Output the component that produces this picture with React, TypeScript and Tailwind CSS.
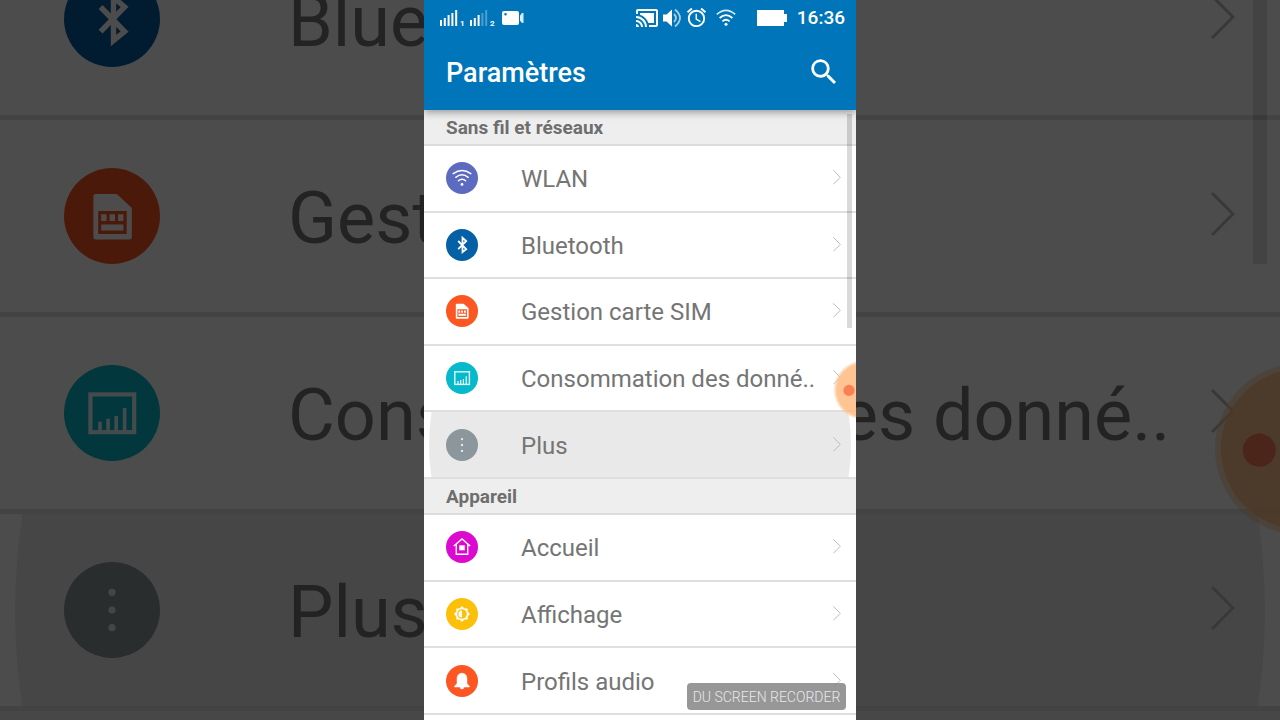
import React from "react";
import { MdAlarm, MdCastConnected, MdSearch } from "react-icons/md";

/* ROW ICONS, all drawn on a 32 unit disc */
const glyphs = {
  wifi: (
    <g fill="none" stroke="#fff" strokeWidth="1.5" strokeLinecap="round">
      <path d="M7.2 11.6Q16 5.4 24.8 11.6" />
      <path d="M9.8 15.3Q16 10.4 22.2 15.3" />
      <path d="M12.4 18.8Q16 15.6 19.6 18.8" />
      <circle cx="16" cy="22.4" r="1.4" fill="#fff" stroke="none" />
    </g>
  ),
  bluetooth: (
    <path d="M12.2 12L20.2 20.2L16.5 23.2V8.8L20.2 12L12.2 20.2" fill="none" stroke="#fff" strokeWidth="1.8" />
  ),
  sim: (
    <g fill="#fff">
      <path
        fillRule="evenodd"
        d="M10.6 8.7H17.6L22.6 13.3V23C22.6 23.5 22.3 23.8 21.8 23.8H10.6C10.1 23.8 9.8 23.5 9.8 23V9.5C9.8 9 10.1 8.7 10.6 8.7ZM11.4 14.3V22H20.9V14.3Z"
      />
      <path d="M12.4 15.4h1.8v2.3h-1.8zM15.2 15.4h1.8v2.3h-1.8zM18 15.4h1.8v2.3h-1.8zM12.4 18.8h7.4v2h-7.4z" />
    </g>
  ),
  data: (
    <g fill="none" stroke="#e6fbfd">
      <rect x="8.8" y="9.8" width="14.6" height="12.6" strokeWidth="1.4" />
      <path d="M12 22V18.9M14.7 22V17.9M17.4 22V17M20.2 22V14.3" strokeWidth="1.2" />
    </g>
  ),
  more: (
    <g fill="#e4e8ea">
      <circle cx="16" cy="10.1" r="1.2" />
      <circle cx="16" cy="16" r="1.2" />
      <circle cx="16" cy="21.9" r="1.2" />
    </g>
  ),
  home: (
    <g>
      <path d="M7.8 15L16 8L24.2 15M10.3 13.2V23.2H21.7V13.2" fill="none" stroke="#fff" strokeWidth="1.4" />
      <rect x="13.3" y="14.3" width="5.4" height="5" fill="#fff" />
    </g>
  ),
  display: (
    <g>
      <path
        fillRule="evenodd"
        fill="#fff"
        d="M16 8L18.4 10.4H21.6V13.6L24 16L21.6 18.4V21.6H18.4L16 24L13.6 21.6H10.4V18.4L8 16L10.4 13.6V10.4H13.6ZM16 11.2A4.8 4.8 0 1 0 16 20.8A4.8 4.8 0 1 0 16 11.2Z"
      />
      <path d="M16 12.4A3.6 3.6 0 0 0 16 19.6Z" fill="#fff" />
    </g>
  ),
  bell: (
    <path
      d="M16 8.2C19.4 8.2 21 10.8 21 13.8V18.4L23.4 21.2V22H18A2 2 0 0 1 14 22H8.6V21.2L11 18.4V13.8C11 10.8 12.6 8.2 16 8.2Z"
      fill="#fff"
      stroke="#fff"
      strokeWidth="0.5"
    />
  ),
};

type Item = { label: string; color: string; glyph: keyof typeof glyphs; pressed?: boolean };

const wireless: Item[] = [
  { label: "WLAN", color: "#5c6bc0", glyph: "wifi" },
  { label: "Bluetooth", color: "#0560a6", glyph: "bluetooth" },
  { label: "Gestion carte SIM", color: "#fc5622", glyph: "sim" },
  { label: "Consommation des donné..", color: "#06b9cc", glyph: "data" },
  { label: "Plus", color: "#8b979c", glyph: "more", pressed: true },
];

const device: Item[] = [
  { label: "Accueil", color: "#dc0ad0", glyph: "home" },
  { label: "Affichage", color: "#fdc00a", glyph: "display" },
  { label: "Profils audio", color: "#fc5622", glyph: "bell" },
];

const small = {
  row: "border-b-2 pl-[22px] pr-[15px]",
  disc: "size-8",
  label: "ml-[43px] pt-0.5 text-2xl",
  chevron: "h-4 w-2",
  ripple: "size-[422px]",
};

const large = {
  row: "border-b-5 pl-16 pr-[45px]",
  disc: "size-24",
  label: "ml-32 pt-1.5 text-7xl",
  chevron: "h-12 w-6",
  ripple: "size-[1250px]",
};

function Row({ item, size }: { item: Item; size: typeof small }) {
  return (
    <li className="min-h-0">
      <a href="#" className={`relative flex h-full items-center overflow-hidden border-[#dfdfdf] ${size.row}`}>
        {item.pressed && (
          <span
            className={`absolute top-1/2 left-1/2 -translate-x-1/2 -translate-y-1/2 rounded-full bg-[#e9e9e9] ${size.ripple}`}
          />
        )}
        <svg viewBox="0 0 32 32" className={`relative shrink-0 ${size.disc}`}>
          <circle cx="16" cy="16" r="16" fill={item.color} />
          {glyphs[item.glyph]}
        </svg>
        <span className={`relative flex-1 whitespace-nowrap text-[#757575] ${size.label}`}>{item.label}</span>
        <svg viewBox="0 0 24 48" className={`relative shrink-0 ${size.chevron}`}>
          <path d="M1 1L22 22L1 43" fill="none" stroke="#bdbdbd" strokeWidth="3" />
        </svg>
      </a>
    </li>
  );
}

function SectionTitle({ children }: { children: React.ReactNode }) {
  return (
    <h2 className="flex h-9 items-center border-b-2 border-[#dcdcdc] bg-[#eee] pt-0.5 pl-[22px] text-[19px] font-bold text-[#6e6e6e]">
      {children}
    </h2>
  );
}

function FloatingDot({ className }: { className: string }) {
  return (
    <svg viewBox="0 0 24 60" className={`absolute top-[360px] right-0 ${className}`}>
      <circle cx="31" cy="30" r="29" fill="#fdc08a" fillOpacity="0.5" />
      <circle cx="31" cy="30" r="27" fill="#fdbb80" fillOpacity="0.75" />
      <circle cx="17" cy="30.4" r="5.6" fill="#fb7e55" />
    </svg>
  );
}

function Signal({ level, sim }: { level: number; sim: string }) {
  return (
    <div className="flex w-[30px] items-end">
      <svg viewBox="0 0 20 18" className="h-[18px] w-5" fill="#fff">
        {[6, 8, 11, 13, 16].map((h, i) => (
          <rect key={h} x={i * 3.8} y={17 - h} width="2" height={h} fillOpacity={i < level ? 1 : 0.3} />
        ))}
      </svg>
      <span className="text-[8px] leading-[6px] font-bold">{sim}</span>
    </div>
  );
}

function StatusBar() {
  return (
    <div className="flex h-[35px] items-center pr-[11px] pl-4 text-white">
      <Signal level={5} sim="1" />
      <Signal level={3} sim="2" />
      <svg viewBox="0 0 22 14" className="ml-0.5 h-3.5 w-[22px]" fill="#fff">
        <path
          fillRule="evenodd"
          d="M2 0H15Q17 0 17 2V12Q17 14 15 14H2Q0 14 0 12V2Q0 0 2 0ZM3.5 2A1.3 1.3 0 1 0 3.5 4.6A1.3 1.3 0 1 0 3.5 2Z"
        />
        <path d="M18 4.5L20 2H21.5V12H20L18 9.5Z" fillOpacity="0.85" />
      </svg>

      <div className="ml-auto flex items-center">
        <MdCastConnected className="size-6" />
        <svg viewBox="0 0 20 20" className="ml-1 size-5" fill="#fff">
          <path d="M0 6.5H3.5L9 1.5V18.5L3.5 13.5H0Z" />
          <g fill="none" stroke="#fff" strokeWidth="1.8" strokeOpacity="0.65">
            <path d="M11 6Q15 10 11 14" />
            <path d="M12 1.5Q22 10 12 18.5" />
          </g>
        </svg>
        <MdAlarm className="ml-0.5 size-[23px]" />
        <svg viewBox="0 0 20 17" className="ml-2 h-[17px] w-5" fill="none" stroke="#fff" strokeWidth="1.7">
          <path d="M0.8 5.4Q10 -2.6 19.2 5.4" strokeOpacity="0.85" />
          <path d="M3.6 9Q10 3.2 16.4 9" />
          <path d="M6.4 12.3Q10 9.2 13.6 12.3" />
          <circle cx="10" cy="15.2" r="1.5" fill="#fff" stroke="none" />
        </svg>
        <svg viewBox="0 0 30 16" className="ml-[21px] h-4 w-[30px]" fill="#fff">
          <path d="M0 0H27V4H30V12H27V16H0Z" />
        </svg>
        <span className="ml-2.5 pt-0.5 text-[19px] font-medium">16:36</span>
      </div>
    </div>
  );
}

/* enlarged, dimmed copy of the list that fills the page behind the phone */
function Backdrop() {
  return (
    <div inert className="absolute inset-0 flex flex-col justify-center overflow-hidden bg-white">
      <ul className="grid h-[788px] shrink-0 auto-rows-fr">
        {wireless.slice(1).map((item) => (
          <Row key={item.label} item={item} size={large} />
        ))}
      </ul>
      <div className="h-[86px] shrink-0 bg-[#eee]" />
      <div className="absolute top-0 right-[13px] h-[264px] w-3.5 bg-black/12" />
      <FloatingDot className="h-[178px] w-[71px]" />
      <div className="absolute inset-0 bg-black/70" />
    </div>
  );
}

export default function App() {
  return (
    <div className="relative flex h-screen justify-center overflow-hidden font-[Roboto,sans-serif]">
      <Backdrop />

      <main className="relative w-full max-w-[432px] overflow-hidden bg-white">
        {/* HEADER */}
        <header className="relative z-10 bg-[#0075b9] shadow-[0_2px_8px_rgba(0,0,0,0.4)]">
          <StatusBar />
          <div className="flex h-[75px] items-center justify-between pr-[15px] pb-0.5 pl-[22px] text-white">
            <h1 className="pt-1 text-[27px] font-medium">Paramètres</h1>
            <button aria-label="Rechercher">
              <MdSearch className="size-[34px]" />
            </button>
          </div>
        </header>

        {/* SETTINGS */}
        <SectionTitle>Sans fil et réseaux</SectionTitle>
        <ul className="grid h-[333px] auto-rows-fr">
          {wireless.map((item) => (
            <Row key={item.label} item={item} size={small} />
          ))}
        </ul>
        <SectionTitle>Appareil</SectionTitle>
        <ul className="grid h-[200px] auto-rows-fr">
          {device.map((item) => (
            <Row key={item.label} item={item} size={small} />
          ))}
        </ul>

        {/* OVERLAYS */}
        <div className="absolute top-[114px] right-1 h-[214px] w-[5px] bg-black/15" />
        <FloatingDot className="h-[60px] w-6" />
        <div className="absolute right-2.5 bottom-2.5 flex h-[27px] w-[159px] items-center justify-center rounded-sm bg-[#858585]/85 text-sm font-light whitespace-nowrap text-[#e8e8e8]">
          DU SCREEN RECORDER
        </div>
      </main>
    </div>
  );
}
